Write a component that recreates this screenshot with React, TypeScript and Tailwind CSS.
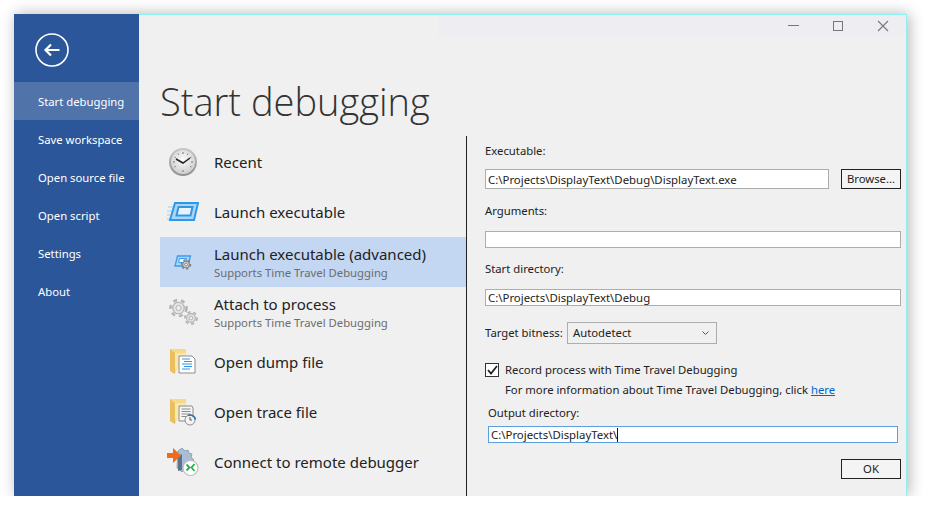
const uiFont = "font-['Noto_Sans',sans-serif]";

const navItems = ["Start debugging", "Save workspace", "Open source file", "Open script", "Settings", "About"];

const ClockIcon = () => (
  <svg width="30" height="30" viewBox="0 0 30 30">
    <defs>
      <radialGradient id="clockFace" cx="50%" cy="40%" r="60%">
        <stop offset="0%" stopColor="#fafafa" />
        <stop offset="100%" stopColor="#cfcfcf" />
      </radialGradient>
      <linearGradient id="clockRim" x1="0" y1="0" x2="0" y2="1">
        <stop offset="0%" stopColor="#c8c8c8" />
        <stop offset="100%" stopColor="#8f8f8f" />
      </linearGradient>
    </defs>
    <circle cx="15" cy="15" r="14" fill="url(#clockRim)" />
    <circle cx="15" cy="15" r="12" fill="url(#clockFace)" />
    <path d="M15 5v2M15 23v2M5 15h2M23 15h2M10 6.500l.7 1.300M20 6.500l-.7 1.300M6.500 10l1.300.7M23.500 10l-1.300.7M6.500 20l1.300-.7M23.500 20l-1.300-.7" stroke="#777" strokeWidth="1" />
    <path d="M8 12l7 4 7-5" stroke="#222" strokeWidth="1.500" fill="none" />
  </svg>
);

const LaunchIcon = () => (
  <svg width="32" height="20" viewBox="0 0 32 20">
    <path d="M8 1h23l-4 17H3z" fill="#a9d6f8" stroke="#2f97e8" strokeWidth="2" />
    <path d="M11.500 5h14l-2 8.500H9.500z" fill="#e8f4fd" stroke="#2f97e8" strokeWidth="2" />
    <path d="M1 5h5M0 9h4M0 13h3M0 17h2" stroke="#9ccdf3" strokeWidth="1" />
  </svg>
);

const Gear = ({ cx, cy, r, color }: { cx: number; cy: number; r: number; color: string }) => (
  <g>
    <circle cx={cx} cy={cy} r={r * 0.72} fill="#e4e4e4" stroke={color} strokeWidth="1.200" />
    <circle cx={cx} cy={cy} r={r} fill="none" stroke={color} strokeWidth={r * 0.32} strokeDasharray={`${r * 0.5} ${r * 0.5}`} />
    <circle cx={cx} cy={cy} r={r * 0.32} fill="#f0f0f0" stroke={color} strokeWidth="1" />
  </g>
);

const LaunchAdvancedIcon = () => (
  <svg width="18" height="15" viewBox="0 0 18 15">
    <path d="M3.500 1h13l-2.500 10H1z" fill="#a9d6f8" stroke="#3f9be8" strokeWidth="1.300" />
    <path d="M5.500 3.500h7l-.8 4h-7z" fill="#e8f4fd" stroke="#3f9be8" strokeWidth="1" />
    <Gear cx={12} cy={9.500} r={4.500} color="#808080" />
  </svg>
);

const GearsIcon = () => (
  <svg width="29" height="28" viewBox="0 0 29 28">
    <Gear cx={9.500} cy={10} r={8} color="#b4b4b4" />
    <Gear cx={22} cy={20} r={6} color="#b4b4b4" />
  </svg>
);

const FolderBack = () => (
  <>
    <path d="M1 1h16v20H8l-2 5-5-3z" fill="#f7d98c" />
    <path d="M1 1l5 4v21l-5-3z" fill="#eabf5e" />
    <path d="M6 5h11v16H6z" fill="#fbe7ac" />
  </>
);

const DumpIcon = () => (
  <svg width="28" height="28" viewBox="0 0 28 28">
    <FolderBack />
    <path d="M10 8h13l3 3v14H10z" fill="#fff" stroke="#8c8c8c" />
    <path d="M13 11h8M15 13.500h8M13 16h10M15 18.500h8M13 21h8" stroke="#2f97e8" strokeWidth="1.200" />
  </svg>
);

const TraceIcon = () => (
  <svg width="28" height="28" viewBox="0 0 28 28">
    <FolderBack />
    <path d="M10 8h13l1 2v13H10z" fill="#f5f5f5" stroke="#8c8c8c" />
    <path d="M12.500 11h9M12.500 13.500h9M12.500 16h9M12.500 18.500h6" stroke="#8a8a8a" />
    <circle cx="21" cy="22" r="5" fill="#f4f4f4" stroke="#8c8c8c" />
    <path d="M21 19v3h2" stroke="#555" fill="none" />
    <path d="M19 17.500a5.500 5.500 0 0 1 7.500 4" stroke="#2b6fb5" strokeWidth="1.600" fill="none" />
  </svg>
);

const RemoteIcon = () => (
  <svg width="32" height="30" viewBox="0 0 32 30">
    <path d="M15 1l3 3 3-1 1 3 3 1-1 3 3 3-3 3 1 3-3 1-1 3-3-1-3 3-3-3-2-1 1-17z" fill="#a9bdd4" stroke="#8ea3bc" />
    <path d="M11 9l4-2v16l-4 1z" fill="#5f7288" />
    <path d="M0 6h6V1l8 7.500-8 7.500v-5H0z" fill="#f26a1b" />
    <circle cx="23.500" cy="21" r="7.500" fill="#fff" stroke="#bdbdbd" strokeWidth="1.200" />
    <path d="M19.500 17.500l3 3-3 3M27.500 17l-3 3.500 3 3.500" stroke="#22b14c" strokeWidth="1.800" fill="none" />
  </svg>
);

const actions = [
  { title: "Recent", icon: <ClockIcon /> },
  { title: "Launch executable", icon: <LaunchIcon /> },
  { title: "Launch executable (advanced)", sub: "Supports Time Travel Debugging", icon: <LaunchAdvancedIcon />, active: true },
  { title: "Attach to process", sub: "Supports Time Travel Debugging", icon: <GearsIcon /> },
  { title: "Open dump file", icon: <DumpIcon /> },
  { title: "Open trace file", icon: <TraceIcon /> },
  { title: "Connect to remote debugger", icon: <RemoteIcon /> },
];

const inputBase = "h-[17px] bg-white border border-[#adadad] px-[2px] text-[11.4px] leading-[15px] text-[#222] flex items-center whitespace-nowrap";

export default function App() {
  return (
    <div className={`w-[926px] h-[516px] bg-white overflow-hidden ${uiFont}`}>
      <div className="h-[496px] overflow-hidden pl-[14px] pt-[14px]">
        <div className="w-[893px] h-[482px] flex bg-[#f0f0f0] border-t border-r border-[#8ff0f0] shadow-[2px_0_14px_rgba(0,0,0,0.3)]">
          <aside className="w-[125px] shrink-0 bg-[#2b579a] -mt-px">
            <div className="h-[68px] pt-[19px] pl-[21px]">
              <svg width="34" height="34" viewBox="0 0 34 34" fill="none" stroke="white">
                <circle cx="17" cy="17" r="16" strokeWidth="1.600" />
                <path d="M10.500 17h14M16 11.500L10.500 17l5.500 5.500" strokeWidth="2.200" />
              </svg>
            </div>
            {navItems.map((item, i) => (
              <div key={item} className={`h-[38px] pl-[24px] pt-[2px] flex items-center text-[11.3px] text-white ${i === 0 ? "bg-[#5073a9]" : ""}`}>
                {item}
              </div>
            ))}
          </aside>

          <main className="flex-1 flex flex-col min-w-0">
            <div className="h-[21px] flex justify-end items-center">
              <div className="h-full w-[468px] bg-[#eeeef2] flex items-center justify-end gap-[34px] pr-[17px]">
                <div className="w-[11px] h-px bg-[#777]" />
                <div className="w-[10px] h-[10px] border border-[#777]" />
                <svg width="12" height="12" viewBox="0 0 12 12" stroke="#777" strokeWidth="1.100">
                  <path d="M1 1l10 10M11 1L1 11" />
                </svg>
              </div>
            </div>

            <h1 className="h-[100px] pl-[21px] pt-[39px] text-[38px] leading-[52px] font-light text-[#333] font-['Open_Sans',sans-serif]">
              Start debugging
            </h1>

            <div className="flex-1 flex min-h-0 pl-[21px]">
              <div className="w-[306px] shrink-0 pt-px">
                {actions.map((a) => (
                  <div key={a.title} className={`h-[50px] flex items-center ${a.active ? "bg-[#c3d6f2]" : ""}`}>
                    <div className="w-[46px] mr-[8px] shrink-0 flex justify-center">{a.icon}</div>
                    <div>
                      <div className="text-[15px] leading-[20px] text-[#222]">{a.title}</div>
                      {a.sub && <div className="text-[11.3px] leading-[17px] text-[#6d6d6d]">{a.sub}</div>}
                    </div>
                  </div>
                ))}
              </div>

              <div className="flex-1 border-l border-[#222] pl-[18px] pr-[5px] text-[11.3px] text-[#222]">
                <div className="h-[14px] mt-[8px] leading-[14px]">Executable:</div>
                <div className="flex justify-between mt-[11px]">
                  <div className={`${inputBase} !h-[20px] w-[344px]`}>C:\Projects\DisplayText\Debug\DisplayText.exe</div>
                  <div className="w-[60px] h-[20px] border border-[#222] bg-[#f4f4f4] flex items-center justify-center">Browse...</div>
                </div>
                <div className="h-[14px] mt-[15px] leading-[14px]">Arguments:</div>
                <div className={`${inputBase} mt-[13px]`} />
                <div className="h-[14px] mt-[14px] leading-[14px]">Start directory:</div>
                <div className={`${inputBase} mt-[13px]`}>C:\Projects\DisplayText\Debug</div>
                <div className="flex items-center mt-[16px] h-[22px]">
                  <span className="w-[82px]">Target bitness:</span>
                  <div className="w-[150px] h-[22px] border border-[#adadad] bg-[#f0f0f0] pl-[5px] pr-[7px] flex items-center justify-between">
                    Autodetect
                    <svg width="7" height="5" viewBox="0 0 7 5" fill="none" stroke="#555">
                      <path d="M.5.500L3.500 3.500 6.500.500" />
                    </svg>
                  </div>
                </div>
                <div className="flex items-center mt-[18px] h-[16px]">
                  <div className="w-[14px] h-[14px] border border-[#333] bg-white flex items-center justify-center mr-[6px]">
                    <svg width="11" height="10" viewBox="0 0 11 10" fill="none" stroke="#222" strokeWidth="1.800">
                      <path d="M1 5l3 3.500L10 1" />
                    </svg>
                  </div>
                  Record process with Time Travel Debugging
                </div>
                <div className="pl-[20px] mt-[4px] leading-[16px]">
                  For more information about Time Travel Debugging, click <span className="text-[#0066cc] underline">here</span>
                </div>
                <div className="pl-[3px] mt-[8px] leading-[14px]">Output directory:</div>
                <div className={`${inputBase} ml-[3px] mr-[3px] mt-[6px] !border-[#5b9fe0]`}>
                  C:\Projects\DisplayText\<span className="inline-block w-px h-[14px] bg-[#111]" />
                </div>
                <div className="flex justify-end mt-[16px]">
                  <div className="w-[60px] h-[20px] border border-[#222] bg-[#f4f4f4] flex items-center justify-center">OK</div>
                </div>
              </div>
            </div>
          </main>
        </div>
      </div>
    </div>
  );
}
